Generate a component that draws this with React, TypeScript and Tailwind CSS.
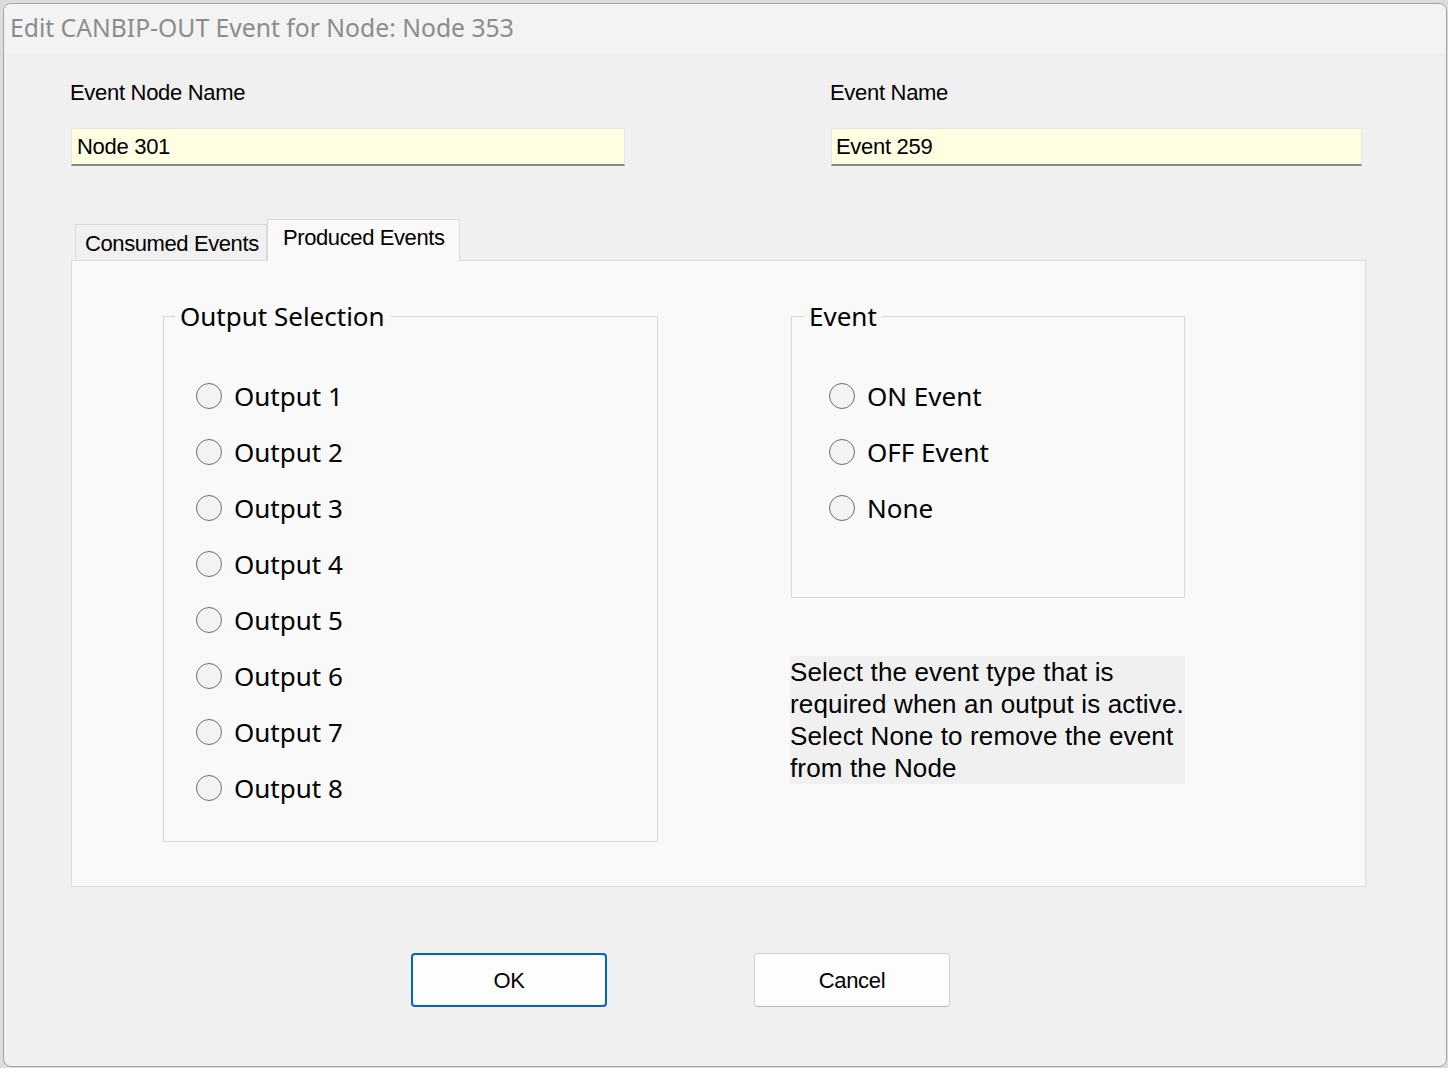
import { useState } from "react";

const winFont = { fontFamily: '"Noto Sans", "Open Sans", sans-serif' };
const gdiFont = { fontFamily: '"Liberation Sans", Arial, sans-serif' };

function Radio({ label, checked, onSelect }: { label: string; checked: boolean; onSelect: () => void }) {
  return (
    <label className="flex h-[56px] cursor-pointer items-center" onClick={onSelect}>
      <span className="flex h-[26px] w-[26px] shrink-0 items-center justify-center rounded-full border-[1.5px] border-[#6d6d6d] bg-[#f3f3f3]">
        {checked && <span className="h-[12px] w-[12px] rounded-full bg-[#1a1a1a]" />}
      </span>
      <span className="ml-[12px] text-[26px] leading-[32px] text-black">{label}</span>
    </label>
  );
}

export default function App() {
  const [output, setOutput] = useState<string | null>(null);
  const [eventType, setEventType] = useState<string | null>(null);
  const [tab, setTab] = useState<"consumed" | "produced">("produced");

  const outputs = ["Output 1", "Output 2", "Output 3", "Output 4", "Output 5", "Output 6", "Output 7", "Output 8"];
  const events = ["ON Event", "OFF Event", "None"];

  return (
    <div className="h-[1068px] w-[1448px] overflow-hidden bg-[#dcdcdc] pl-[3px] pt-[3px]">
      <div className="flex h-[1064px] w-[1444px] flex-col overflow-hidden rounded-[8px] border border-[#a3a3a3] bg-[#f0f0f0]">
        {/* title bar */}
        <div className="flex h-[49px] shrink-0 items-center bg-[#f3f3f3] pl-[6px]" style={winFont}>
          <span className="text-[24.7px] leading-none text-[#8c8c8c]">Edit CANBIP-OUT Event for Node: Node 353</span>
        </div>

        <div className="flex-1 pl-[66px]" style={gdiFont}>
          {/* name fields */}
          <div className="flex pt-[28px]">
            <div className="w-[760px]">
              <div className="text-[22px] leading-[24px] tracking-[-0.3px] text-black">Event Node Name</div>
              <div className="ml-[1px] mt-[23px] flex h-[38px] w-[554px] items-center border border-b-2 border-[#e6e6e6] border-b-[#8a8a8a] bg-[#ffffe1] pl-[5px] text-[22px] tracking-[-0.3px] text-black">
                Node 301
              </div>
            </div>
            <div>
              <div className="text-[22px] leading-[24px] tracking-[-0.3px] text-black">Event Name</div>
              <div className="ml-[1px] mt-[23px] flex h-[38px] w-[531px] items-center border border-b-2 border-[#e6e6e6] border-b-[#8a8a8a] bg-[#ffffe1] pl-[4px] text-[22px] tracking-[-0.3px] text-black">
                Event 259
              </div>
            </div>
          </div>

          {/* tabs */}
          <div className="ml-[1px] mt-[53px] w-[1295px]">
            <div className="flex h-[41px] items-end pl-[4px]">
              <button
                onClick={() => setTab("consumed")}
                className="relative h-[36px] w-[192px] border border-b-0 border-[#d9d9d9] bg-[#f0f0f0] pl-[9px] pt-[2px] text-left text-[22px] tracking-[-0.4px] text-black"
              >
                Consumed Events
              </button>
              <button
                onClick={() => setTab("produced")}
                className="relative z-10 -mb-px h-[42px] w-[193px] border border-b-0 border-[#d9d9d9] bg-[#f9f9f9] pb-[6px] pl-[15px] text-left text-[22px] tracking-[-0.4px] text-black"
              >
                Produced Events
              </button>
            </div>

            <div className="flex h-[627px] border border-[#dcdcdc] bg-[#f9f9f9] pl-[91px] pt-[39px]" style={winFont}>
              {tab === "produced" && (
                <>
                  <fieldset className="h-fit w-[495px] border border-[#d8d8d8] pb-[25px]">
                    <legend className="ml-[11px] px-[5px] text-[26px] leading-[32px] text-black">Output Selection</legend>
                    <div className="pl-[32px] pt-[36px]">
                      {outputs.map((o) => (
                        <Radio key={o} label={o} checked={output === o} onSelect={() => setOutput(o)} />
                      ))}
                    </div>
                  </fieldset>

                  <div className="ml-[133px] flex w-[395px] flex-col">
                    <fieldset className="w-[394px] border border-[#d8d8d8] pb-[61px]">
                      <legend className="ml-[12px] px-[5px] text-[26px] leading-[32px] text-black">Event</legend>
                      <div className="pl-[37px] pt-[36px]">
                        {events.map((e) => (
                          <Radio key={e} label={e} checked={eventType === e} onSelect={() => setEventType(e)} />
                        ))}
                      </div>
                    </fieldset>
                    <p
                      className="-ml-px mt-[58px] w-[395px] bg-[#f0f0f0] text-[26px] leading-[32px] tracking-[0.15px] text-black"
                      style={gdiFont}
                    >
                      Select the event type that is required when an output is active. Select None to remove the event from the Node
                    </p>
                  </div>
                </>
              )}
            </div>
          </div>

          {/* buttons */}
          <div className="mt-[66px] flex pl-[341px]">
            <button className="h-[54px] w-[196px] rounded-[4px] border-2 border-[#0067c0] bg-[#fdfdfd] text-[22px] tracking-[-0.3px] text-black">
              OK
            </button>
            <button className="ml-[147px] h-[54px] w-[196px] rounded-[4px] border border-[#d0d0d0] border-b-[#b8b8b8] bg-[#fdfdfd] text-[22px] tracking-[-0.3px] text-black">
              Cancel
            </button>
          </div>
        </div>
      </div>
    </div>
  );
}
